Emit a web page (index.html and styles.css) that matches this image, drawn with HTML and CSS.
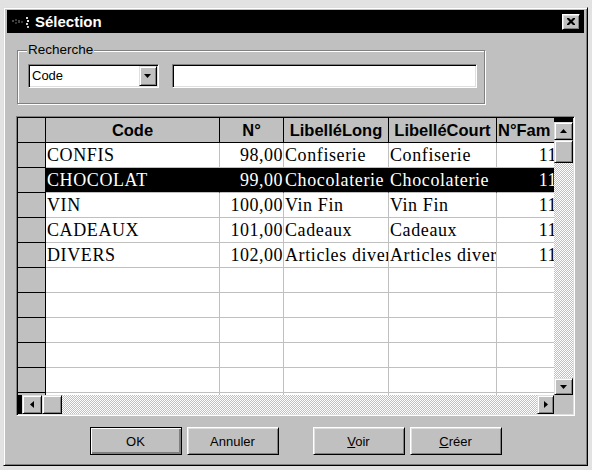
FILE: index.html
```html
<!DOCTYPE html>
<html lang="fr">
<head>
<meta charset="utf-8">
<title>Sélection</title>
<link rel="stylesheet" href="styles.css">
</head>
<body>
<div class="window">
  <div class="titlebar">
    <svg class="app-icon" width="18" height="12" viewBox="0 0 18 12">
      <rect x="0" y="4" width="2" height="2" fill="#4a4a4a"/>
      <rect x="3" y="3" width="2" height="2" fill="#3a3a3a"/>
      <rect x="3" y="6" width="2" height="2" fill="#333"/>
      <rect x="6" y="4" width="2" height="3" fill="#444"/>
      <rect x="9" y="5" width="2" height="2" fill="#3a3a3a"/>
      <rect x="14" y="1" width="2" height="2" fill="#d8d8d8"/>
      <rect x="15" y="4" width="2" height="2" fill="#e8e8e8"/>
      <rect x="14" y="7" width="2" height="2" fill="#d0d0d0"/>
      <rect x="15" y="10" width="2" height="2" fill="#bbb"/>
    </svg>
    <span class="title">Sélection</span>
    <span class="close">
      <svg width="8" height="7" viewBox="0 0 8 7"><path d="M0 0h2l2 2 2-2h2v1l-2.5 2.5 2.5 2.5v1h-2l-2-2-2 2h-2v-1l2.5-2.5-2.5-2.5z" fill="#000"/></svg>
    </span>
  </div>

  <div class="content">
    <fieldset class="search">
      <legend>Recherche</legend>
      <div class="combo">
        <span class="combo-text">Code</span>
        <span class="drop"><svg width="7" height="4" viewBox="0 0 7 4"><path d="M0 0h7L3.5 4z" fill="#000"/></svg></span>
      </div>
      <div class="edit"></div>
    </fieldset>

    <div class="grid">
      <div class="viewport">
        <div class="row head">
          <div class="ind"></div>
          <div class="th">Code</div>
          <div class="th">N°</div>
          <div class="th">LibelléLong</div>
          <div class="th">LibelléCourt</div>
          <div class="th left">N°Fam</div>
        </div>
        <div class="row">
          <div class="ind"></div>
          <div class="td">CONFIS</div>
          <div class="td num">98,00</div>
          <div class="td">Confiserie</div>
          <div class="td">Confiserie</div>
          <div class="td num fam">11,00</div>
        </div>
        <div class="row selected">
          <div class="ind"></div>
          <div class="td">CHOCOLAT</div>
          <div class="td num">99,00</div>
          <div class="td">Chocolaterie</div>
          <div class="td">Chocolaterie</div>
          <div class="td num fam">11,00</div>
        </div>
        <div class="row">
          <div class="ind"></div>
          <div class="td">VIN</div>
          <div class="td num">100,00</div>
          <div class="td">Vin Fin</div>
          <div class="td">Vin Fin</div>
          <div class="td num fam">11,00</div>
        </div>
        <div class="row">
          <div class="ind"></div>
          <div class="td">CADEAUX</div>
          <div class="td num">101,00</div>
          <div class="td">Cadeaux</div>
          <div class="td">Cadeaux</div>
          <div class="td num fam">11,00</div>
        </div>
        <div class="row">
          <div class="ind"></div>
          <div class="td">DIVERS</div>
          <div class="td num">102,00</div>
          <div class="td">Articles divers</div>
          <div class="td">Articles divers</div>
          <div class="td num fam">11,00</div>
        </div>
        <div class="row"><div class="ind"></div><div class="td"></div><div class="td"></div><div class="td"></div><div class="td"></div><div class="td"></div></div>
        <div class="row"><div class="ind"></div><div class="td"></div><div class="td"></div><div class="td"></div><div class="td"></div><div class="td"></div></div>
        <div class="row"><div class="ind"></div><div class="td"></div><div class="td"></div><div class="td"></div><div class="td"></div><div class="td"></div></div>
        <div class="row"><div class="ind"></div><div class="td"></div><div class="td"></div><div class="td"></div><div class="td"></div><div class="td"></div></div>
        <div class="row"><div class="ind"></div><div class="td"></div><div class="td"></div><div class="td"></div><div class="td"></div><div class="td"></div></div>
        <div class="row"><div class="ind"></div><div class="td"></div><div class="td"></div><div class="td"></div><div class="td"></div><div class="td"></div></div>
      </div>

      <div class="vscroll">
        <span class="sbtn up"><svg width="7" height="4" viewBox="0 0 7 4"><path d="M3.5 0L7 4H0z" fill="#000"/></svg></span>
        <span class="thumb vthumb"></span>
        <span class="track"></span>
        <span class="sbtn down"><svg width="7" height="4" viewBox="0 0 7 4"><path d="M0 0h7L3.5 4z" fill="#000"/></svg></span>
      </div>

      <div class="hscroll">
        <span class="sbtn left"><svg width="4" height="7" viewBox="0 0 4 7"><path d="M4 0v7L0 3.5z" fill="#000"/></svg></span>
        <span class="thumb hthumb"></span>
        <span class="track"></span>
        <span class="sbtn right"><svg width="4" height="7" viewBox="0 0 4 7"><path d="M0 0v7L4 3.5z" fill="#000"/></svg></span>
      </div>

      <div class="corner"></div>
    </div>

    <div class="buttons">
      <div class="btn-group">
        <button class="btn default">OK</button>
        <button class="btn">Annuler</button>
      </div>
      <div class="btn-group">
        <button class="btn"><u>V</u>oir</button>
        <button class="btn"><u>C</u>réer</button>
      </div>
    </div>
  </div>
</div>
</body>
</html>
```

FILE: styles.css
```css
* { box-sizing: border-box; }

html, body { margin: 0; }

body {
  width: 592px;
  height: 470px;
  overflow: hidden;
  background: #e2e2e2;
  padding: 7px 4px 4px 3px;
  font-family: "Liberation Sans", Arial, sans-serif;
  color: #000;
}

.window {
  width: 585px;
  height: 459px;
  background: #c0c0c0;
  border: 1px solid;
  border-color: #dfdfdf #000 #000 #dfdfdf;
  box-shadow: inset 1px 1px #fff, inset -1px -1px #808080;
  padding: 2px 3px 3px 3px;
  display: flex;
  flex-direction: column;
}

/* Title bar */
.titlebar {
  height: 23px;
  flex: none;
  background: #000;
  color: #fff;
  display: flex;
  align-items: center;
  padding: 0 4px 0 5px;
}

.app-icon { flex: none; display: block; }

.title {
  flex: 1;
  margin-left: 5px;
  font-weight: bold;
  font-size: 15px;
  line-height: 18px;
}

.close {
  width: 18px;
  height: 16px;
  background: #c0c0c0;
  border: 1px solid;
  border-color: #fff #000 #000 #fff;
  box-shadow: inset 1px 1px #dfdfdf, inset -1px -1px #808080;
  display: flex;
  align-items: center;
  justify-content: center;
}
.close svg { display: block; }

/* Content */
.content {
  flex: 1;
  display: flex;
  flex-direction: column;
}

.search {
  margin: 9px 0 0 10px;
  width: 468px;
  border: 1px solid #808080;
  box-shadow: 1px 1px 0 #fff, inset 1px 1px 0 #fff;
  padding: 6px 7px 15px 10px;
  display: flex;
  gap: 13px;
  min-width: 0;
}

.search legend {
  font-size: 13.5px;
  line-height: 16px;
  padding: 0 1px;
  margin-left: -1px;
  background: #c0c0c0;
}

.combo, .edit {
  height: 24px;
  background: #fff;
  border: 1px solid;
  border-color: #808080 #fff #fff #808080;
  box-shadow: inset 1px 1px #000, inset -1px -1px #dfdfdf;
}

.combo {
  width: 131px;
  display: flex;
  align-items: center;
  padding: 1px 1px 1px 3px;
}

.combo-text {
  flex: 1;
  font-size: 13px;
  line-height: 20px;
}

.drop {
  width: 18px;
  height: 20px;
  background: #c0c0c0;
  border: 1px solid;
  border-color: #dfdfdf #000 #000 #dfdfdf;
  box-shadow: inset 1px 1px #fff, inset -1px -1px #808080;
  display: flex;
  align-items: center;
  justify-content: center;
}
.drop svg { display: block; }

.edit { width: 306px; }

/* Grid */
.grid {
  margin: 12px 0 0 9px;
  width: 559px;
  height: 300px;
  flex: none;
  border: 1px solid;
  border-color: #808080 #fff #fff #808080;
  box-shadow: inset 1px 1px #000, inset -1px -1px #dfdfdf;
  padding: 1px;
  display: grid;
  grid-template-columns: 536px 19px;
  grid-template-rows: 277px 19px;
}

.viewport {
  overflow: hidden;
  background: #fff;
}

.row {
  display: grid;
  grid-template-columns: 28px 174px 64px 105px 108px 88px;
  width: 567px;
  height: 25px;
}

.row > div {
  height: 25px;
  border-right: 1px solid #c0c0c0;
  border-bottom: 1px solid #c0c0c0;
  white-space: nowrap;
  overflow: hidden;
}

.row > .ind {
  background: #c0c0c0;
  border-right-color: #000;
  border-bottom-color: #000;
}

.head .th {
  background: #c0c0c0;
  border-right-color: #000;
  border-bottom-color: #000;
  font-weight: bold;
  font-size: 16.5px;
  line-height: 24px;
  text-align: center;
}
.head .th.left { text-align: left; padding-left: 1px; }

.td {
  font-family: "Liberation Serif", "Times New Roman", serif;
  font-size: 18px;
  letter-spacing: 0.6px;
  line-height: 23px;
  padding-top: 1px;
  padding-left: 1px;
}

.td.num { text-align: right; padding-left: 0; padding-right: 0; letter-spacing: 0.5px; }
.td.fam { padding-right: 3px; }

.selected .td {
  background: #000;
  color: #fff;
  border-right-color: #000;
}

/* Scrollbars */
.sbtn, .thumb {
  flex: none;
  background: #c0c0c0;
  border: 1px solid;
  border-color: #dfdfdf #000 #000 #dfdfdf;
  box-shadow: inset 1px 1px #fff, inset -1px -1px #808080;
  display: flex;
  align-items: center;
  justify-content: center;
}
.sbtn svg { display: block; }

.track {
  flex: 1;
  background: repeating-conic-gradient(#fff 0 25%, #c0c0c0 0 50%) 0 0 / 2px 2px;
}

.vscroll {
  display: flex;
  flex-direction: column;
  border-top: 4px solid #000;
}
.vscroll .up { height: 18px; }
.vthumb { height: 23px; }
.vscroll .down { height: 17px; }

.hscroll {
  display: flex;
  border-left: 4px solid #000;
}
.hscroll .left { width: 20px; }
.hthumb { width: 20px; }
.hscroll .right { width: 17px; }

.corner { background: #c0c0c0; }

/* Buttons */
.buttons {
  margin-top: 11px;
  display: flex;
  justify-content: center;
  gap: 34px;
}

.btn-group {
  display: flex;
  gap: 5px;
}

.btn {
  width: 92px;
  height: 28px;
  margin: 0;
  padding: 0;
  font-family: "Liberation Sans", Arial, sans-serif;
  font-size: 13px;
  color: #000;
  background: #c0c0c0;
  border: 1px solid;
  border-color: #fff #000 #000 #fff;
  box-shadow: inset 1px 1px #dfdfdf, inset -1px -1px #808080;
}

.btn.default {
  border-color: #000;
  box-shadow: inset 1px 1px #fff, inset -2px -2px #808080;
}
```
